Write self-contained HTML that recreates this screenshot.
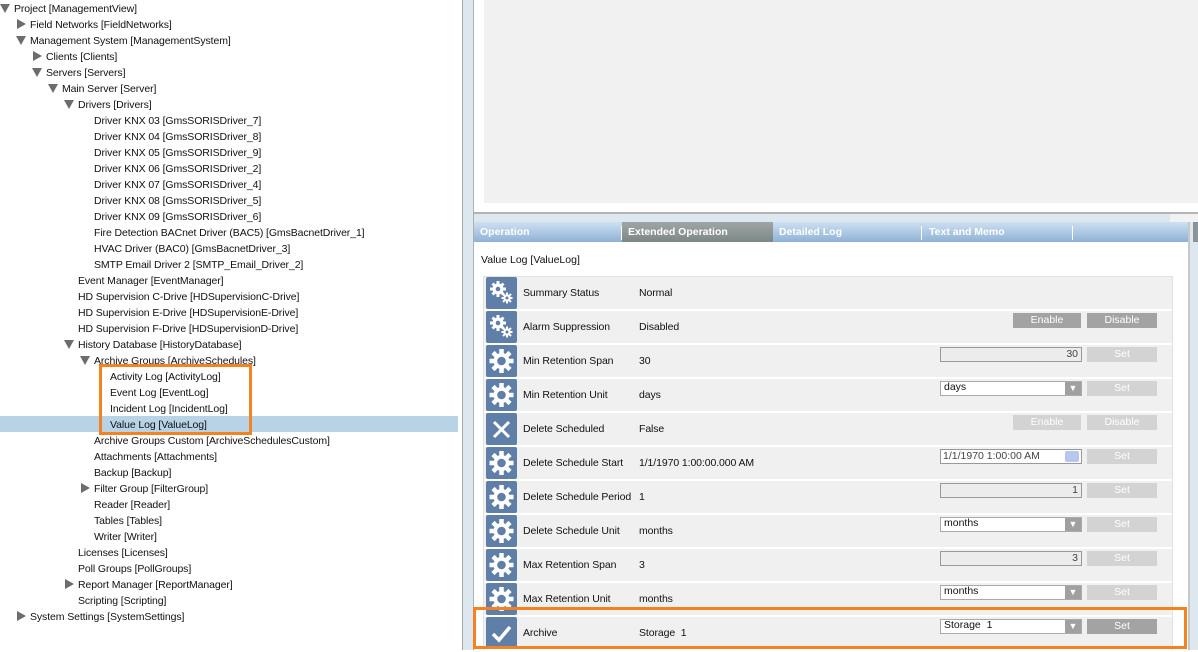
<!DOCTYPE html>
<html><head><meta charset="utf-8"><style>
*{margin:0;padding:0;box-sizing:border-box}
body{width:1198px;height:650px;overflow:hidden;background:#fff;font-family:"Liberation Sans",sans-serif;font-size:10.5px;color:#111;position:relative}
.a{position:absolute;white-space:nowrap}
.t{position:absolute;height:16px;line-height:18px;white-space:nowrap;font-size:10.5px;letter-spacing:-0.1px}
.tri-d{position:absolute;width:0;height:0;border-left:5px solid transparent;border-right:5px solid transparent;border-top:9px solid #6d6d6d}
.tri-r{position:absolute;width:0;height:0;border-top:5px solid transparent;border-bottom:5px solid transparent;border-left:9px solid #6d6d6d}
.row{position:absolute;left:484px;width:688px;height:32px;background:#f0f0f0}
.ic{position:absolute;left:2px;top:0;width:31px;height:32px;background:#5f7fa8;border-radius:2px}
.lb{position:absolute;left:39px;top:10px;letter-spacing:-0.1px}
.vl{position:absolute;left:155px;top:10px;letter-spacing:-0.1px}
.tb{position:absolute;left:456px;top:2px;width:142px;height:15px;background:#ececec;border:1px solid #999;text-align:right;padding-right:3px;line-height:13px;color:#444}
.dd{position:absolute;left:456px;top:2px;width:142px;height:15px;background:#fff;border:1px solid #aaa;line-height:11px;padding-left:3px}
.dd:after{content:"▼";position:absolute;right:0;top:0;width:16px;height:13px;background:#a0a0a0;color:#fff;font-size:9px;text-align:center;line-height:13px}
.btn{position:absolute;top:2px;height:15px;line-height:15px;text-align:center;color:#fff}
.on{background:#a3a3a3}.off{background:#d3d3d3}
.tab{position:absolute;top:222px;height:20px;line-height:20px;color:#fff;font-weight:bold;font-size:10.5px;padding-left:6px}
</style></head><body>
<div class="a" style="left:0;top:416px;width:458px;height:16px;background:#b8d3e6"></div>
<div id="tree"></div>
<div class="a" style="left:462px;top:0;width:1px;height:650px;background:#a8a8a8"></div>
<div class="a" style="left:463px;top:0;width:10px;height:650px;background:#dce7f0"></div>
<div class="a" style="left:473px;top:0;width:1px;height:650px;background:#b0b0b0"></div>
<div class="a" style="left:484px;top:0;width:714px;height:203px;background:#f1f1f1"></div>
<div class="a" style="left:474px;top:212px;width:724px;height:2px;background:#b4b4b4"></div>
<div class="a" style="left:474px;top:214px;width:724px;height:8px;background:#dce7f0"></div>
<div class="a" style="left:1170px;top:214px;width:28px;height:8px;background:#f2f2f2"></div>
<div class="a" style="left:474px;top:222px;width:714px;height:20px;background:linear-gradient(#cde0f2,#8fb1d6)"></div>
<div class="a" style="left:622px;top:222px;width:151px;height:20px;background:linear-gradient(#9fa6a5,#7c8886)"></div>
<div class="a" style="left:621px;top:226px;width:1px;height:14px;background:#fff"></div>
<div class="a" style="left:921px;top:226px;width:1px;height:14px;background:#fff"></div>
<div class="a" style="left:1072px;top:226px;width:1px;height:14px;background:#fff"></div>
<div class="tab" style="left:474px">Operation</div>
<div class="tab" style="left:622px">Extended Operation</div>
<div class="tab" style="left:773px">Detailed Log</div>
<div class="tab" style="left:923px">Text and Memo</div>
<div class="a" style="left:1188px;top:222px;width:2px;height:428px;background:#c8c8c8"></div>
<div class="a" style="left:1190px;top:222px;width:8px;height:428px;background:#dce7f0"></div>
<div class="a" style="left:1193px;top:222px;width:5px;height:20px;background:#8a9494"></div>
<div class="a" style="left:481px;top:254px">Value Log [ValueLog]</div>
<div class="a" style="left:483px;top:276px;width:690px;height:374px;border:1px solid #e2e2e2;border-bottom:none"></div>
<div id="rows"></div>
<div class="a" style="left:99px;top:364px;width:153px;height:71px;border:3px solid #f58220"></div>
<div class="a" style="left:473px;top:607px;width:714px;height:42px;border:3px solid #f58220"></div>
<script>
var T=[[0,'d','Project [ManagementView]'],[1,'r','Field Networks [FieldNetworks]'],[1,'d','Management System [ManagementSystem]'],[2,'r','Clients [Clients]'],[2,'d','Servers [Servers]'],[3,'d','Main Server [Server]'],[4,'d','Drivers [Drivers]'],
[5,'','Driver KNX 03 [GmsSORISDriver_7]'],[5,'','Driver KNX 04 [GmsSORISDriver_8]'],[5,'','Driver KNX 05 [GmsSORISDriver_9]'],[5,'','Driver KNX 06 [GmsSORISDriver_2]'],[5,'','Driver KNX 07 [GmsSORISDriver_4]'],[5,'','Driver KNX 08 [GmsSORISDriver_5]'],[5,'','Driver KNX 09 [GmsSORISDriver_6]'],[5,'','Fire Detection BACnet Driver (BAC5) [GmsBacnetDriver_1]'],[5,'','HVAC Driver (BAC0) [GmsBacnetDriver_3]'],[5,'','SMTP Email Driver 2 [SMTP_Email_Driver_2]'],
[4,'','Event Manager [EventManager]'],[4,'','HD Supervision C-Drive [HDSupervisionC-Drive]'],[4,'','HD Supervision E-Drive [HDSupervisionE-Drive]'],[4,'','HD Supervision F-Drive [HDSupervisionD-Drive]'],[4,'d','History Database [HistoryDatabase]'],[5,'d','Archive Groups [ArchiveSchedules]'],
[6,'','Activity Log [ActivityLog]'],[6,'','Event Log [EventLog]'],[6,'','Incident Log [IncidentLog]'],[6,'','Value Log [ValueLog]'],
[5,'','Archive Groups Custom [ArchiveSchedulesCustom]'],[5,'','Attachments [Attachments]'],[5,'','Backup [Backup]'],[5,'r','Filter Group [FilterGroup]'],[5,'','Reader [Reader]'],[5,'','Tables [Tables]'],[5,'','Writer [Writer]'],
[4,'','Licenses [Licenses]'],[4,'','Poll Groups [PollGroups]'],[4,'r','Report Manager [ReportManager]'],[4,'','Scripting [Scripting]'],[1,'r','System Settings [SystemSettings]']];
var h='';T.forEach(function(e,i){var y=i*16,tx=14+e[0]*16,ax=tx-14;
if(e[1]=='d')h+='<div class="tri-d" style="left:'+ax+'px;top:'+(y+4)+'px"></div>';
if(e[1]=='r')h+='<div class="tri-r" style="left:'+(ax+1)+'px;top:'+(y+3)+'px"></div>';
h+='<div class="t" style="left:'+tx+'px;top:'+y+'px">'+e[2]+'</div>';});
document.getElementById('tree').innerHTML=h;
var gears='<svg width="31" height="32" viewBox="0 0 31 32"><g fill="#fff"><circle cx="12" cy="12" r="5.5"/><g stroke="#fff" stroke-width="3"><path d="M12 4v16M4 12h16M6.5 6.5l11 11M17.5 6.5l-11 11"/></g><circle cx="12" cy="12" r="2.3" fill="#5f7fa8"/><circle cx="21" cy="21" r="3.6"/><g stroke="#fff" stroke-width="2"><path d="M21 15.5v11M15.5 21h11M17 17l8 8M25 17l-8 8"/></g><circle cx="21" cy="21" r="1.5" fill="#5f7fa8"/></g></svg>';
var gear='<svg width="31" height="32" viewBox="0 0 31 32"><g fill="#fff"><circle cx="15.5" cy="16" r="8"/><g stroke="#fff" stroke-width="4.5"><path d="M15.5 4v24M3.5 16h24M7 7.5l17 17M24 7.5l-17 17"/></g><circle cx="15.5" cy="16" r="4.3" fill="#5f7fa8"/></g></svg>';
var xx='<svg width="31" height="32"><path d="M8 9l15 15M23 9L8 24" stroke="#fff" stroke-width="3"/></svg>';
var ck='<svg width="31" height="32"><path d="M7 17l6 6 11-13" stroke="#fff" stroke-width="3.5" fill="none"/></svg>';
var R=[[gears,'Summary Status','Normal',''],[gears,'Alarm Suppression','Disabled','en1'],[gear,'Min Retention Span','30','tb:30'],[gear,'Min Retention Unit','days','dd:days'],[xx,'Delete Scheduled','False','en0'],[gear,'Delete Schedule Start','1/1/1970 1:00:00.000 AM','dt'],[gear,'Delete Schedule Period','1','tb:1'],[gear,'Delete Schedule Unit','months','dd:months'],[gear,'Max Retention Span','3','tb:3'],[gear,'Max Retention Unit','months','dd:months'],[ck,'Archive','Storage&nbsp; 1','dd:Storage&nbsp; 1']];
var s='';R.forEach(function(r,i){var y=277+i*34,c='';
if(r[3]=='en1')c='<div class="btn on" style="left:529px;width:68px">Enable</div><div class="btn on" style="left:603px;width:70px">Disable</div>';
else if(r[3]=='en0')c='<div class="btn off" style="left:529px;width:68px">Enable</div><div class="btn off" style="left:603px;width:70px">Disable</div>';
else if(r[3]){var k=r[3].split(':');
if(k[0]=='tb')c='<div class="tb">'+k[1]+'</div>';
if(k[0]=='dd')c='<div class="dd">'+k[1]+'</div>';
if(k[0]=='dt')c='<div class="tb" style="text-align:left;padding-left:2px;background:#fff">1/1/1970 1:00:00 AM<span style="position:absolute;right:2px;top:1px;width:14px;height:11px;background:#b5c8ee;border-radius:2px"></span></div>';
c+='<div class="btn '+(i==10?'on':'off')+'" style="left:603px;width:70px">Set</div>';}
s+='<div class="row" style="top:'+y+'px"><div class="ic">'+r[0]+'</div><div class="a lb">'+r[1]+'</div><div class="a vl">'+r[2]+'</div>'+c+'</div>';});
document.getElementById('rows').innerHTML=s;
</script>
</body></html>
